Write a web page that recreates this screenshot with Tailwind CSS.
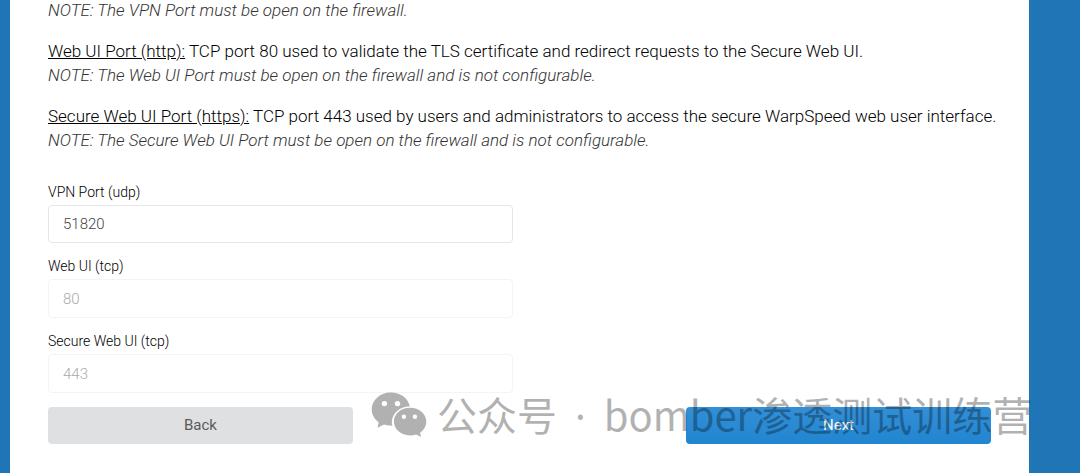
<!DOCTYPE html>
<html lang="en">
<head>
  <meta charset="UTF-8" />
  <meta name="viewport" content="width=device-width, initial-scale=1.0" />
  <script src="https://cdn.jsdelivr.net/npm/@tailwindcss/browser@4"></script>
  <title>WarpSpeed Setup</title>
</head>
<body class="min-h-screen flex bg-[#1f75b5] pl-[10px] pr-[51px] font-['Roboto',sans-serif] text-black overflow-hidden">
  <main class="flex-1 min-w-0 bg-white px-[38px]">
    <div class="-mt-[2px] space-y-[17px] text-[17px] leading-[24px] font-light">
      <p class="italic text-[#333]">NOTE: The VPN Port must be open on the firewall.</p>
      <div>
        <p><span class="underline">Web UI Port (http):</span> TCP port 80 used to validate the TLS certificate and redirect requests to the Secure Web UI.</p>
        <p class="italic text-[#333]">NOTE: The Web UI Port must be open on the firewall and is not configurable.</p>
      </div>
      <div>
        <p class="lg:whitespace-nowrap"><span class="underline">Secure Web UI Port (https):</span> TCP port 443 used by users and administrators to access the secure WarpSpeed web user interface.</p>
        <p class="italic text-[#333]">NOTE: The Secure Web UI Port must be open on the firewall and is not configurable.</p>
      </div>
    </div>

    <form id="portForm" class="mt-[30px]">
      <div class="w-1/2 pr-[7px] space-y-[13px] text-[14px] font-light">
        <div>
          <label for="vpnPort" class="block leading-[20px] mb-[3px]">VPN Port (udp)</label>
          <input type="text" id="vpnPort" name="vpnPort" value="51820"
            class="block w-full h-[38px] px-[14px] border border-[#e6e6e6] rounded-[4px] bg-white text-[15px] text-[#444]" />
        </div>
        <div>
          <label for="webPort" class="block leading-[20px] mb-[3px]">Web UI (tcp)</label>
          <input type="text" id="webPort" name="webPort" value="80" disabled
            class="block w-full h-[39px] px-[14px] border border-[#f4f4f4] rounded-[4px] bg-white text-[15px] text-[#aaa]" />
        </div>
        <div>
          <label for="securePort" class="block leading-[20px] mb-[3px]">Secure Web UI (tcp)</label>
          <input type="text" id="securePort" name="securePort" value="443" disabled
            class="block w-full h-[39px] px-[14px] border border-[#f4f4f4] rounded-[4px] bg-white text-[15px] text-[#aaa]" />
        </div>
      </div>

      <div class="mt-[14px] flex justify-between text-[15px]">
        <button type="button" class="w-[305px] h-[37px] rounded-[4px] bg-[#dfe0e1] text-[#5a5a5a]">Back</button>
        <button type="submit" class="w-[305px] h-[37px] rounded-[4px] bg-linear-to-b from-[#338fd6] to-[#2185d0] text-white">Next</button>
      </div>
    </form>
  </main>

  <!-- watermark -->
  <div class="absolute left-[371px] top-[387px] flex items-center gap-[10px] opacity-30 pointer-events-none text-black">
    <svg class="w-[56px] h-[46px]" viewBox="0 0 56 46" fill="currentColor" aria-hidden="true">
      <path fill-rule="evenodd" d="M20 0.500C9.200 0.500 0.700 8 0.700 17.400C0.700 22.500 3.500 27 7.700 30.200L6.500 35.700L13 32.600C15.300 33.300 18.200 33.900 21.400 33.800C18.800 24 27.500 14.400 38.900 14.300C37 6.200 29.200 0.500 20 0.500ZM13.400 8.900a2.700 2.700 0 1 1 0 5.400a2.700 2.700 0 1 1 0 -5.400ZM26.500 8.900a2.700 2.700 0 1 1 0 5.400a2.700 2.700 0 1 1 0 -5.400Z" />
      <path fill-rule="evenodd" d="M39 15.700C30 15.700 22.900 21.800 22.900 29.500C22.900 37.300 30 43.400 39 43.400C41.200 43.400 43.200 43.100 45 42.500L50.100 45L49 40.700C52.900 38 55.300 34 55.300 29.500C55.300 21.800 48 15.700 39 15.700ZM32.900 22.600a2.200 2.200 0 1 1 0 4.400a2.200 2.200 0 1 1 0 -4.400ZM43.900 22.600a2.200 2.200 0 1 1 0 4.400a2.200 2.200 0 1 1 0 -4.400Z" />
    </svg>
    <div class="flex items-baseline gap-[18px] whitespace-nowrap font-['Noto_Sans_CJK_SC',sans-serif] text-[40px] leading-[54px]" lang="zh-CN">
      <span>公众号</span>
      <span class="font-['Noto_Sans',sans-serif]">·</span>
      <span>bomber渗透测试训练营</span>
    </div>
  </div>
</body>
</html>
